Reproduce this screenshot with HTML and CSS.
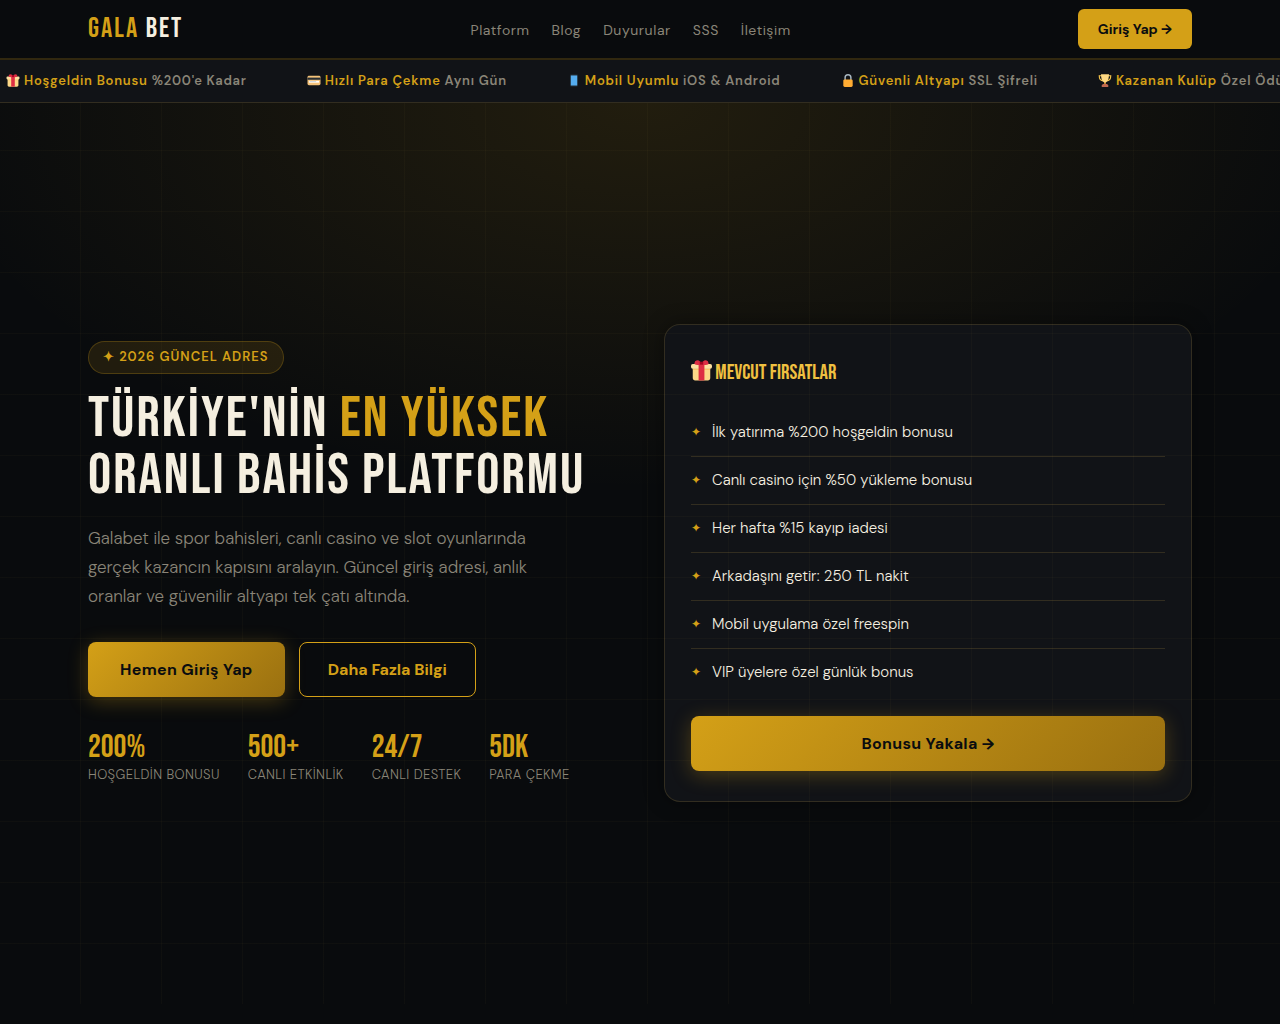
FILE: index.html
```
<!DOCTYPE html>
<html lang="tr">
<head>
<meta charset="UTF-8">
<meta name="viewport" content="width=device-width, initial-scale=1.0">
<title>Gala Bet</title>
<link rel="stylesheet" href="styles.css">
</head>
<body>

<!-- emoji icons -->
<svg class="sprite" aria-hidden="true">
<symbol id="i-gift" viewBox="0 0 36 36">
<path fill="#FDD888" d="M33 31c0 2.2-1.8 4-4 4H7c-2.2 0-4-1.8-4-4V14h30v17z"/>
<path fill="#FCAB40" opacity=".5" d="M3 15h30v2H3z"/>
<path fill="#FDE0A0" d="M3 7h30a3 3 0 0 1 3 3v2a3 3 0 0 1-3 3H3a3 3 0 0 1-3-3v-2a3 3 0 0 1 3-3z"/>
<path fill="#DD2E44" d="M13 7h10v28H13z"/>
<path fill="#DD2E44" d="M18 8c-4 1-10 1-12-1-1-2 1-3 1-5 3-2 6-2 8 0l3 3 3-3c2-2 5-2 8 0 0 2 2 3 1 5-2 2-8 2-12 1z"/>
<path fill="#A0041E" d="M15 3h6v5h-6z"/>
</symbol>
<symbol id="i-card" viewBox="0 0 36 36">
<path fill="#F4C27A" d="M4 5h28a4 4 0 0 1 4 4v18a4 4 0 0 1-4 4H4a4 4 0 0 1-4-4V9a4 4 0 0 1 4-4z"/>
<path fill="#292F33" d="M0 10h36v6H0z"/>
<path fill="#FFF" d="M4 19h28v5H4z"/>
<path fill="#8899A6" d="M6 21h18v1H6z"/>
</symbol>
<symbol id="i-phone" viewBox="0 0 36 36">
<path fill="#1c2227" d="M11 0h14a4 4 0 0 1 4 4v28a4 4 0 0 1-4 4H11a4 4 0 0 1-4-4V4a4 4 0 0 1 4-4z"/>
<path fill="#55ACEE" d="M9 4h18v28H9z"/>
</symbol>
<symbol id="i-lock" viewBox="0 0 36 36">
<path fill="none" stroke="#AAB8C2" stroke-width="4" d="M10 18v-8a8 8 0 0 1 16 0v8"/>
<path fill="#FFAC33" d="M9 15h18a4 4 0 0 1 4 4v13a4 4 0 0 1-4 4H9a4 4 0 0 1-4-4V19a4 4 0 0 1 4-4z"/>
</symbol>
<symbol id="i-cup" viewBox="0 0 36 36">
<path fill="none" stroke="#FFCC4D" stroke-width="3" d="M9 5H2c0 8 3 13 10 14M27 5h7c0 8-3 13-10 14"/>
<path fill="#FFAC33" d="M16 20h4v10h-4z"/>
<path fill="#FFD983" d="M7 1h22c0 12-3 22-11 23C10 23 7 13 7 1z"/>
<path fill="#C1694F" d="M12 28h12l3 4v4H9v-4z"/>
</symbol>
</svg>

<header class="header">
<div class="container header-inner">
<a href="#" class="logo">GALA <span>BET</span></a>
<nav class="menu">
<a href="#">Platform</a>
<a href="#">Blog</a>
<a href="#">Duyurular</a>
<a href="#">SSS</a>
<a href="#">İletişim</a>
</nav>
<button type="button" class="btn-login">Giriş Yap →</button>
</div>
</header>

<div class="ticker">
<div class="ticker-track">
<p><svg class="emoji"><use href="#i-gift"/></svg> <b>Hoşgeldin Bonusu</b> %200'e Kadar</p>
<p><svg class="emoji"><use href="#i-card"/></svg> <b>Hızlı Para Çekme</b> Aynı Gün</p>
<p><svg class="emoji"><use href="#i-phone"/></svg> <b>Mobil Uyumlu</b> iOS &amp; Android</p>
<p><svg class="emoji"><use href="#i-lock"/></svg> <b>Güvenli Altyapı</b> SSL Şifreli</p>
<p><svg class="emoji"><use href="#i-cup"/></svg> <b>Kazanan Kulüp</b> Özel Ödüller</p>
</div>
</div>

<main class="hero">
<div class="container hero-grid">

<section>
<div class="badge">✦ 2026 GÜNCEL ADRES</div>
<h1>TÜRKİYE'NİN <span>EN YÜKSEK</span> ORANLI BAHİS PLATFORMU</h1>
<p class="lead">Galabet ile spor bahisleri, canlı casino ve slot oyunlarında gerçek kazancın kapısını aralayın. Güncel giriş adresi, anlık oranlar ve güvenilir altyapı tek çatı altında.</p>
<div class="actions">
<button type="button" class="btn btn-gold">Hemen Giriş Yap</button>
<button type="button" class="btn btn-line">Daha Fazla Bilgi</button>
</div>
<div class="stats">
<div><strong>200%</strong><span>HOŞGELDİN BONUSU</span></div>
<div><strong>500+</strong><span>CANLI ETKİNLİK</span></div>
<div><strong>24/7</strong><span>CANLI DESTEK</span></div>
<div><strong>5DK</strong><span>PARA ÇEKME</span></div>
</div>
</section>

<section class="card">
<h2><svg class="emoji"><use href="#i-gift"/></svg> MEVCUT FIRSATLAR</h2>
<ul>
<li>İlk yatırıma %200 hoşgeldin bonusu</li>
<li>Canlı casino için %50 yükleme bonusu</li>
<li>Her hafta %15 kayıp iadesi</li>
<li>Arkadaşını getir: 250 TL nakit</li>
<li>Mobil uygulama özel freespin</li>
<li>VIP üyelere özel günlük bonus</li>
</ul>
<button type="button" class="btn btn-gold btn-full">Bonusu Yakala →</button>
</section>

</div>
</main>

</body>
</html>
```
FILE: styles.css
```
* {
	margin: 0;
	padding: 0;
	box-sizing: border-box;
}

:root {
	--gold: #d4a017;
	--gold-dark: #9a7010;
	--gold-light: #f0c040;
	--bg: #090b0d;
	--panel: #111317;
	--text: #f5efe0;
	--muted: #8a8578;
	--line: rgba(212, 180, 80, .17);
}

body {
	background: var(--bg);
	color: var(--text);
	font-family: "DM Sans", Inter, sans-serif;
	font-size: 16px;
	line-height: 1.6;
	overflow-x: hidden;
}

a {
	color: inherit;
	text-decoration: none;
}

button {
	font-family: inherit;
	cursor: pointer;
}

.sprite {
	display: none;
}

.emoji {
	width: 1em;
	height: 1em;
	vertical-align: -2px;
}

.container {
	max-width: 1200px;
	width: 100%;
	margin: 0 auto;
	padding: 0 48px;
}

/* header */
.header {
	border-bottom: 2px solid rgba(212, 160, 23, .2);
}

.header-inner {
	display: flex;
	align-items: center;
	justify-content: space-between;
	height: 58px;
}

.logo {
	font-family: "Bebas Neue", "Roboto Condensed", sans-serif;
	font-size: 28px;
	line-height: 48px;
	letter-spacing: 2px;
	color: var(--gold);
}

.logo span {
	color: var(--text);
}

.menu {
	display: flex;
	gap: 22px;
	padding-top: 2px;
	font-size: 14px;
	letter-spacing: .04em;
	color: var(--muted);
}

.btn-login {
	height: 40px;
	padding: 0 20px;
	border: 0;
	border-radius: 6px;
	background: var(--gold);
	color: #0a0c0f;
	font-size: 14px;
	font-weight: 700;
}

/* ticker */
.ticker {
	overflow: hidden;
	background: var(--panel);
	border-bottom: 1px solid var(--line);
}

.ticker-track {
	display: flex;
	gap: 60px;
	padding: 10px 6px;
	white-space: nowrap;
	font-size: 13px;
	line-height: 22px;
	font-weight: 600;
	letter-spacing: .06em;
	color: var(--muted);
}

.ticker .emoji {
	width: 14px;
}

.ticker b {
	font-weight: 600;
	color: var(--gold);
}

/* hero */
.hero {
	position: relative;
	display: flex;
	align-items: center;
	min-height: 90vh;
	padding-bottom: 2px;
	background: radial-gradient(ellipse 80% 60% at 50% 0%, rgba(212, 160, 23, .12), transparent 70%);
}

.hero::after {
	content: "";
	position: absolute;
	inset: 0 0 21px;
	pointer-events: none;
	background:
		repeating-linear-gradient(0deg, transparent 0 60px, rgba(212, 180, 80, .03) 60px 61px),
		repeating-linear-gradient(90deg, transparent 0 80px, rgba(212, 180, 80, .03) 80px 81px);
}

.hero-grid {
	display: grid;
	grid-template-columns: 1fr 1fr;
	gap: 48px;
	align-items: center;
}

.badge {
	display: inline-block;
	padding: 5px 14px 7px;
	border: 1px solid rgba(212, 160, 23, .25);
	border-radius: 20px;
	background: rgba(212, 160, 23, .12);
	color: var(--gold);
	font-size: 13px;
	line-height: 19px;
	font-weight: 600;
	letter-spacing: 1px;
	margin-bottom: 16px;
}

h1 {
	font-family: "Bebas Neue", "Roboto Condensed", sans-serif;
	font-size: 58px;
	line-height: 57px;
	font-weight: 400;
	letter-spacing: 2px;
	margin-bottom: 20px;
}

h1 span {
	color: var(--gold);
}

.lead {
	max-width: 480px;
	margin-bottom: 31px;
	font-size: 17px;
	line-height: 29px;
	font-weight: 300;
	color: var(--muted);
}

.actions {
	display: flex;
	gap: 14px;
	margin-bottom: 34px;
}

.btn {
	position: relative;
	z-index: 1;
	height: 55px;
	padding: 0 32px;
	border: 0;
	border-radius: 8px;
	font-size: 16px;
	font-weight: 700;
	letter-spacing: .02em;
}

.btn-gold {
	background: linear-gradient(135deg, var(--gold), var(--gold-dark));
	color: #0a0c0f;
	box-shadow: 0 4px 20px rgba(212, 160, 23, .3);
}

.btn-line {
	padding: 0 28px;
	border: 1px solid var(--gold);
	background: transparent;
	color: var(--gold);
	letter-spacing: 0;
}

.btn-full {
	width: 100%;
}

.stats {
	display: flex;
	gap: 28px;
}

.stats strong {
	display: block;
	font-family: "Bebas Neue", "Roboto Condensed", sans-serif;
	font-size: 32px;
	line-height: 34px;
	font-weight: 400;
	color: var(--gold);
}

.stats span {
	display: block;
	font-size: 13px;
	line-height: 19px;
	font-weight: 300;
	letter-spacing: .03em;
	color: var(--muted);
}

/* bonus card */
.card {
	padding: 30px 26px;
	border: 1px solid var(--line);
	border-radius: 16px;
	background: var(--panel);
	box-shadow: 0 0 20px rgba(0, 0, 0, .4);
}

.card h2 {
	font-family: "Bebas Neue", "Roboto Condensed", sans-serif;
	font-size: 21px;
	line-height: 36px;
	font-weight: 400;
	color: var(--gold-light);
	margin-bottom: 18px;
}

.card ul {
	list-style: none;
	margin-bottom: 20px;
}

.card li {
	display: flex;
	align-items: center;
	gap: 11px;
	padding: 12px 0;
	border-bottom: 1px solid var(--line);
	font-size: 15px;
	line-height: 23px;
	font-weight: 300;
	color: var(--text);
}

.card li:last-child {
	border-bottom: 0;
}

.card li::before {
	content: "✦";
	color: var(--gold);
	font-size: 12px;
}
```
